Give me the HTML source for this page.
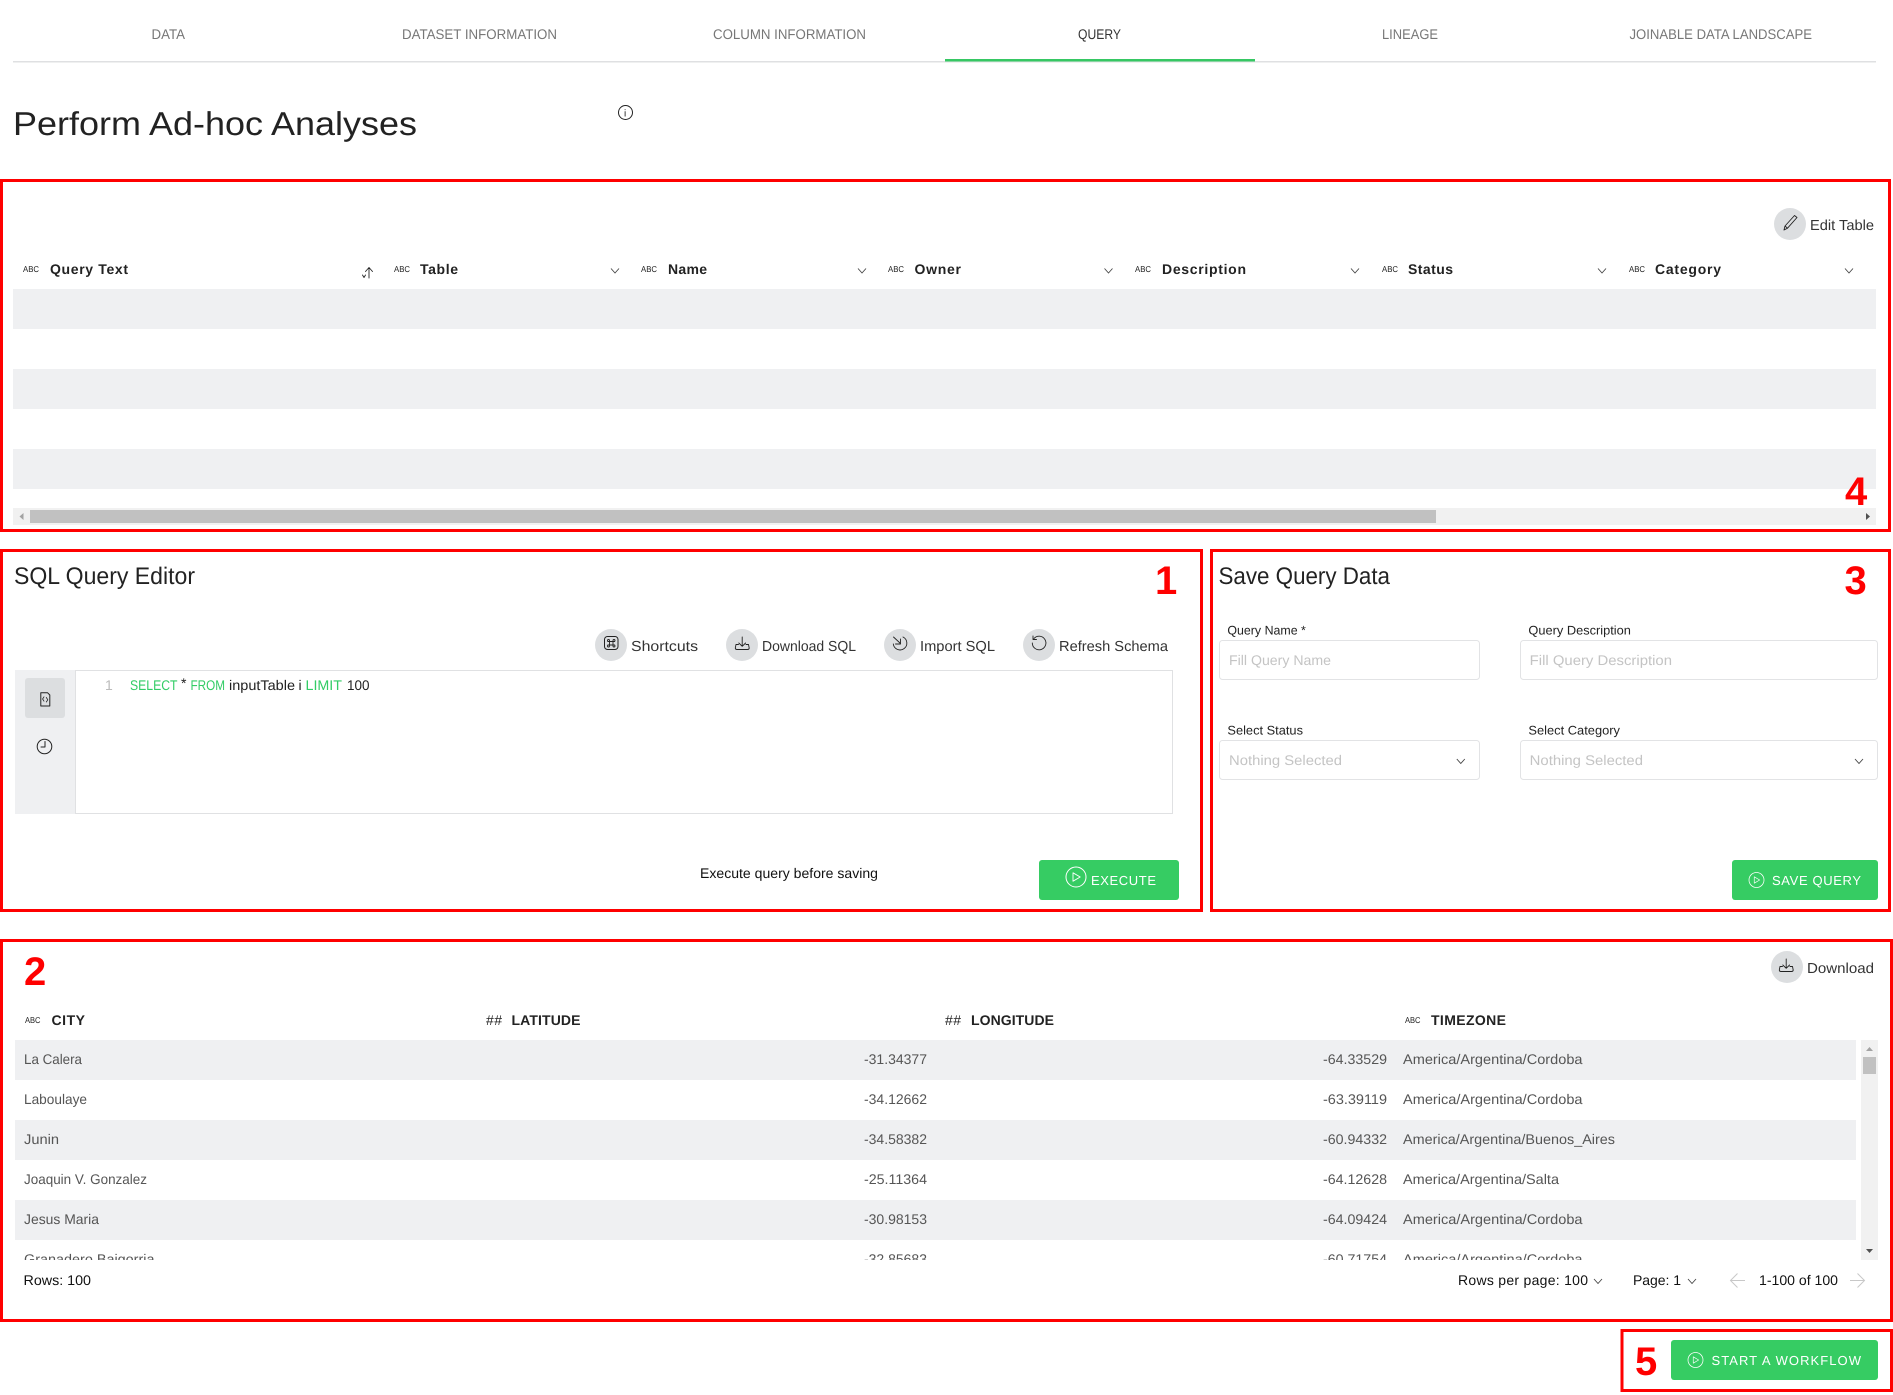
<!DOCTYPE html>
<html lang="en">
<head>
<meta charset="utf-8">
<title>Perform Ad-hoc Analyses</title>
<style>
html,body{margin:0;padding:0;background:#fff}
svg{display:block}
text{font-family:"Liberation Sans",sans-serif;fill:#222;text-rendering:geometricPrecision}
.tab{font-size:14px;fill:#777}
.h{font-size:14px;font-weight:700;fill:#222}
.abc{font-size:8.5px;fill:#222}
.act{font-size:14.5px;fill:#333}
.c{font-size:14px;fill:#555}
.p{font-size:14px;fill:#c4c4c4}
.l{font-size:12.5px;fill:#222}
.b{font-size:13px;fill:#fff;font-weight:400}
.n{font-size:40px;font-weight:700;fill:#f00}
.f{font-size:14px;fill:#111}
.sql{font-size:14px}
.ic{fill:none;stroke:#222;stroke-width:1;stroke-linecap:round;stroke-linejoin:round}
.chev{fill:none;stroke:#444;stroke-width:.9}
.rb{fill:none;stroke:#f00;stroke-width:3}
.in{fill:#fff;stroke:#e2e3e5;stroke-width:1}
</style>
</head>
<body>
<svg xmlns="http://www.w3.org/2000/svg" width="1893" height="1395" viewBox="0 0 1893 1395">
<defs>
<clipPath id="rows"><rect x="0" y="1040" width="1893" height="220"/></clipPath>
<g id="dl" class="ic"><path d="M7.2 0.5V9.5M3.8 6.5L7.2 9.8L10.6 6.5M3.5 8H1L0.3 11.5Q0.3 13 2 13H12.5Q14.2 13 14.2 11.5L13.5 8H11" style="stroke-width:.9"/></g>
<g id="play"><circle cx="0" cy="0" r="1" fill="none" stroke="#fff" stroke-width=".1"/><path d="M-.3 -.42V.42L.42 0Z" fill="none" stroke="#fff" stroke-width=".09" stroke-linejoin="round"/></g>
<path id="ch" class="chev" d="M0 0L4 4.5L8 0"/>
</defs>

<!-- Tabs -->
<rect x="13" y="61" width="1863" height="1.5" fill="#dfe0e2"/>
<rect x="945" y="59" width="310" height="2.5" fill="#36c763"/>
<text class="tab" x="151.5" y="39" textLength="33.5" lengthAdjust="spacingAndGlyphs">DATA</text>
<text class="tab" x="402" y="39" textLength="155" lengthAdjust="spacingAndGlyphs">DATASET INFORMATION</text>
<text class="tab" x="713" y="39" textLength="153" lengthAdjust="spacingAndGlyphs">COLUMN INFORMATION</text>
<text class="tab" style="fill:#333" x="1078" y="39" textLength="43" lengthAdjust="spacingAndGlyphs">QUERY</text>
<text class="tab" x="1382" y="39" textLength="56" lengthAdjust="spacingAndGlyphs">LINEAGE</text>
<text class="tab" x="1629.5" y="39" textLength="182.5" lengthAdjust="spacingAndGlyphs">JOINABLE DATA LANDSCAPE</text>

<!-- Title -->
<text x="13" y="135" style="font-size:33px" textLength="404" lengthAdjust="spacingAndGlyphs">Perform Ad-hoc Analyses</text>
<circle cx="625.5" cy="112.5" r="7" fill="none" stroke="#222" stroke-width="1"/>
<text x="624" y="116.5" style="font-size:10px">i</text>

<!-- Box 4 : queries table -->
<circle cx="1790" cy="224" r="16" fill="#dcdee0"/>
<path class="ic" style="stroke-width:.9" d="M1784 230L1785 226L1794.5 215.5L1797 217.5L1787.5 228.2ZM1785 226L1787.5 228.2"/>
<text class="act" x="1810" y="230" textLength="64" lengthAdjust="spacingAndGlyphs">Edit Table</text>

<text class="abc" x="23" y="272" textLength="16" lengthAdjust="spacingAndGlyphs">ABC</text>
<text class="h" x="50" y="274" textLength="78">Query Text</text>
<path class="ic" d="M369 278V268M365.5 271.5L369 267.5L372.5 271.5M362.5 275L364 277.5L365.5 275" style="stroke-width:.9"/>
<text class="abc" x="394" y="272" textLength="16" lengthAdjust="spacingAndGlyphs">ABC</text>
<text class="h" x="420" y="274" textLength="38">Table</text>
<use href="#ch" x="611" y="268.5"/>
<text class="abc" x="641" y="272" textLength="16" lengthAdjust="spacingAndGlyphs">ABC</text>
<text class="h" x="668" y="274" textLength="39">Name</text>
<use href="#ch" x="858" y="268.5"/>
<text class="abc" x="888" y="272" textLength="16" lengthAdjust="spacingAndGlyphs">ABC</text>
<text class="h" x="914.5" y="274" textLength="46.5">Owner</text>
<use href="#ch" x="1104.5" y="268.5"/>
<text class="abc" x="1135" y="272" textLength="16" lengthAdjust="spacingAndGlyphs">ABC</text>
<text class="h" x="1162" y="274" textLength="84">Description</text>
<use href="#ch" x="1351" y="268.5"/>
<text class="abc" x="1382" y="272" textLength="16" lengthAdjust="spacingAndGlyphs">ABC</text>
<text class="h" x="1408" y="274" textLength="45">Status</text>
<use href="#ch" x="1598" y="268.5"/>
<text class="abc" x="1629" y="272" textLength="16" lengthAdjust="spacingAndGlyphs">ABC</text>
<text class="h" x="1655" y="274" textLength="66">Category</text>
<use href="#ch" x="1845" y="268.5"/>

<rect x="13" y="289" width="1863" height="40" fill="#eff0f2"/>
<rect x="13" y="369" width="1863" height="40" fill="#eff0f2"/>
<rect x="13" y="449" width="1863" height="40" fill="#eff0f2"/>
<rect x="13" y="508" width="1863" height="17" fill="#f1f1f1"/>
<rect x="30" y="510" width="1406" height="13" fill="#c1c1c1"/>
<path d="M23.5 513V520L19.5 516.5Z" fill="#a3a3a3"/>
<path d="M1866 513V520L1870 516.5Z" fill="#505050"/>

<!-- Box 1 : editor -->
<text x="14" y="584" style="font-size:24px" textLength="181" lengthAdjust="spacingAndGlyphs">SQL Query Editor</text>

<circle cx="611" cy="645" r="16" fill="#dcdee0"/>
<rect x="604.5" y="636.5" width="13.5" height="13" rx="3" class="ic"/>
<path class="ic" style="stroke-width:.9" d="M609.5 640.5V646M613 640.5V646M607.8 641.5H614.7M607.8 645H614.7M609.5 641.5H608.5A1 1 0 1 1 609.5 640.5M613 641.5H614A1 1 0 1 0 613 640.5M609.5 645H608.5A1 1 0 1 0 609.5 646M613 645H614A1 1 0 1 1 613 646"/>
<text class="act" x="631" y="651" textLength="67" lengthAdjust="spacingAndGlyphs">Shortcuts</text>

<circle cx="742" cy="645" r="16" fill="#dcdee0"/>
<use href="#dl" x="735" y="636.5"/>
<text class="act" x="762" y="651" textLength="94" lengthAdjust="spacingAndGlyphs">Download SQL</text>

<circle cx="900" cy="645" r="16" fill="#dcdee0"/>
<path class="ic" style="stroke-width:.9" d="M903 637A6.8 6.8 0 1 1 893.3 644M893.5 637L900.5 643.5M900.5 639V644H895.5"/>
<text class="act" x="920" y="651" textLength="75" lengthAdjust="spacingAndGlyphs">Import SQL</text>

<circle cx="1039" cy="645" r="16" fill="#dcdee0"/>
<path class="ic" d="M1034 638.5A6.8 6.8 0 1 1 1032.3 643M1033 636V639.5H1036.5" style="stroke-width:.9"/>
<text class="act" x="1059" y="651" textLength="109" lengthAdjust="spacingAndGlyphs">Refresh Schema</text>

<rect x="15" y="670" width="60" height="144" fill="#eff0f2"/>
<rect x="75.5" y="670.5" width="1097" height="143" fill="#fff" stroke="#e0e1e3" stroke-width="1"/>
<rect x="25" y="678" width="40" height="40" rx="3" fill="#dcdee0"/>
<path class="ic" d="M40.8 692.7H47.5L49.8 695V706H40.8Z" style="stroke-width:1"/>
<path class="ic" d="M44 696.8L42.6 699L44 701.2M46.3 697.5L47.8 699.8L46.3 702" style="stroke-width:.8"/>
<circle cx="44.5" cy="746.5" r="7.3" class="ic" style="stroke-width:1"/>
<path class="ic" d="M45 741.5V747H41" style="stroke-width:1"/>

<text class="sql" style="fill:#bbb" x="105" y="690">1</text>
<text class="sql" style="fill:#33cc66" x="130" y="690" textLength="47.5" lengthAdjust="spacingAndGlyphs">SELECT</text>
<text class="sql" x="181" y="688">*</text>
<text class="sql" style="fill:#33cc66" x="190.5" y="690" textLength="34.5" lengthAdjust="spacingAndGlyphs">FROM</text>
<text class="sql" x="229" y="690" textLength="66" lengthAdjust="spacingAndGlyphs">inputTable</text>
<text class="sql" x="298.5" y="690">i</text>
<text class="sql" style="fill:#33cc66" x="305.5" y="690" textLength="36.5" lengthAdjust="spacingAndGlyphs">LIMIT</text>
<text class="sql" x="347" y="690" textLength="22.5" lengthAdjust="spacingAndGlyphs">100</text>

<text class="f" x="700" y="878" textLength="178" lengthAdjust="spacingAndGlyphs">Execute query before saving</text>
<rect x="1039" y="860" width="140" height="40" rx="3" fill="#36cc63"/>
<use href="#play" transform="translate(1076 877) scale(10)"/>
<text class="b" x="1091" y="885" textLength="65">EXECUTE</text>

<!-- Box 3 : save -->
<text x="1218.5" y="584" style="font-size:24px" textLength="171.5" lengthAdjust="spacingAndGlyphs">Save Query Data</text>
<text class="l" x="1227.4" y="634.5" textLength="78.5" lengthAdjust="spacingAndGlyphs">Query Name *</text>
<text class="l" x="1528.4" y="634.5" textLength="102.5" lengthAdjust="spacingAndGlyphs">Query Description</text>
<rect class="in" x="1219.5" y="640.5" width="260" height="39" rx="3"/>
<rect class="in" x="1520.5" y="640.5" width="357" height="39" rx="3"/>
<text class="p" x="1229" y="665" textLength="102" lengthAdjust="spacingAndGlyphs">Fill Query Name</text>
<text class="p" x="1529.7" y="665" textLength="142.3" lengthAdjust="spacingAndGlyphs">Fill Query Description</text>
<text class="l" x="1227.4" y="734.5" textLength="75.6" lengthAdjust="spacingAndGlyphs">Select Status</text>
<text class="l" x="1528.4" y="734.5" textLength="91.6" lengthAdjust="spacingAndGlyphs">Select Category</text>
<rect class="in" x="1219.5" y="740.5" width="260" height="39" rx="3"/>
<rect class="in" x="1520.5" y="740.5" width="357" height="39" rx="3"/>
<text class="p" x="1229" y="765" textLength="113" lengthAdjust="spacingAndGlyphs">Nothing Selected</text>
<text class="p" x="1529.7" y="765" textLength="113.3" lengthAdjust="spacingAndGlyphs">Nothing Selected</text>
<use href="#ch" x="1456.8" y="759"/>
<use href="#ch" x="1855" y="759"/>
<rect x="1732" y="860" width="146" height="40" rx="3" fill="#36cc63"/>
<use href="#play" transform="translate(1756.5 880) scale(7.5)"/>
<text class="b" x="1772" y="885" textLength="89">SAVE QUERY</text>

<!-- Box 2 : results -->
<circle cx="1787" cy="967" r="16" fill="#dcdee0"/>
<use href="#dl" x="1779" y="958.5"/>
<text class="act" x="1807" y="973" textLength="67" lengthAdjust="spacingAndGlyphs">Download</text>

<text class="abc" x="25" y="1023" textLength="15.5" lengthAdjust="spacingAndGlyphs">ABC</text>
<text class="h" x="51.5" y="1025" textLength="33.5">CITY</text>
<text class="h" style="font-weight:400" x="486" y="1025" textLength="16">##</text>
<text class="h" x="511.5" y="1025" textLength="69">LATITUDE</text>
<text class="h" style="font-weight:400" x="945" y="1025" textLength="16">##</text>
<text class="h" x="971" y="1025" textLength="83">LONGITUDE</text>
<text class="abc" x="1405" y="1023" textLength="15.5" lengthAdjust="spacingAndGlyphs">ABC</text>
<text class="h" x="1431" y="1025" textLength="75">TIMEZONE</text>

<rect x="15" y="1040" width="1841" height="40" fill="#eff0f2"/>
<rect x="15" y="1120" width="1841" height="40" fill="#eff0f2"/>
<rect x="15" y="1200" width="1841" height="40" fill="#eff0f2"/>

<g clip-path="url(#rows)">
<text class="c" x="24" y="1064" textLength="58" lengthAdjust="spacingAndGlyphs">La Calera</text>
<text class="c" x="864" y="1064" textLength="63" lengthAdjust="spacingAndGlyphs">-31.34377</text>
<text class="c" x="1323" y="1064" textLength="64" lengthAdjust="spacingAndGlyphs">-64.33529</text>
<text class="c" x="1403" y="1064" textLength="179.5" lengthAdjust="spacingAndGlyphs">America/Argentina/Cordoba</text>

<text class="c" x="24" y="1104" textLength="63" lengthAdjust="spacingAndGlyphs">Laboulaye</text>
<text class="c" x="864" y="1104" textLength="63" lengthAdjust="spacingAndGlyphs">-34.12662</text>
<text class="c" x="1323" y="1104" textLength="64" lengthAdjust="spacingAndGlyphs">-63.39119</text>
<text class="c" x="1403" y="1104" textLength="179.5" lengthAdjust="spacingAndGlyphs">America/Argentina/Cordoba</text>

<text class="c" x="24" y="1144" textLength="35" lengthAdjust="spacingAndGlyphs">Junin</text>
<text class="c" x="864" y="1144" textLength="63" lengthAdjust="spacingAndGlyphs">-34.58382</text>
<text class="c" x="1323" y="1144" textLength="64" lengthAdjust="spacingAndGlyphs">-60.94332</text>
<text class="c" x="1403" y="1144" textLength="212" lengthAdjust="spacingAndGlyphs">America/Argentina/Buenos_Aires</text>

<text class="c" x="24" y="1184" textLength="123" lengthAdjust="spacingAndGlyphs">Joaquin V. Gonzalez</text>
<text class="c" x="864" y="1184" textLength="63" lengthAdjust="spacingAndGlyphs">-25.11364</text>
<text class="c" x="1323" y="1184" textLength="64" lengthAdjust="spacingAndGlyphs">-64.12628</text>
<text class="c" x="1403" y="1184" textLength="156" lengthAdjust="spacingAndGlyphs">America/Argentina/Salta</text>

<text class="c" x="24" y="1224" textLength="75" lengthAdjust="spacingAndGlyphs">Jesus Maria</text>
<text class="c" x="864" y="1224" textLength="63" lengthAdjust="spacingAndGlyphs">-30.98153</text>
<text class="c" x="1323" y="1224" textLength="64" lengthAdjust="spacingAndGlyphs">-64.09424</text>
<text class="c" x="1403" y="1224" textLength="179.5" lengthAdjust="spacingAndGlyphs">America/Argentina/Cordoba</text>

<text class="c" x="24" y="1264" textLength="130.5" lengthAdjust="spacingAndGlyphs">Granadero Baigorria</text>
<text class="c" x="864" y="1264" textLength="63" lengthAdjust="spacingAndGlyphs">-32.85683</text>
<text class="c" x="1323" y="1264" textLength="64" lengthAdjust="spacingAndGlyphs">-60.71754</text>
<text class="c" x="1403" y="1264" textLength="179.5" lengthAdjust="spacingAndGlyphs">America/Argentina/Cordoba</text>
</g>

<rect x="1861" y="1040" width="17" height="220" fill="#f1f1f1"/>
<rect x="1863" y="1057" width="13" height="17" fill="#c1c1c1"/>
<path d="M1866 1051H1873L1869.5 1047Z" fill="#a3a3a3"/>
<path d="M1866 1249H1873L1869.5 1253Z" fill="#505050"/>

<text class="f" x="23.5" y="1285" textLength="67.5" lengthAdjust="spacingAndGlyphs">Rows: 100</text>
<text class="f" x="1458" y="1285" textLength="130">Rows per page: 100</text>
<use href="#ch" x="1594" y="1279"/>
<text class="f" x="1633" y="1285" textLength="48">Page: 1</text>
<use href="#ch" x="1688" y="1279"/>
<path d="M1745 1280.5H1730.5M1737.5 1273.5L1730.5 1280.5L1737.5 1287.5" fill="none" stroke="#c8c8c8" stroke-width="1"/>
<text class="f" x="1759" y="1285" textLength="79" lengthAdjust="spacingAndGlyphs">1-100 of 100</text>
<path d="M1850 1280.5H1864.5M1857.5 1273.5L1864.5 1280.5L1857.5 1287.5" fill="none" stroke="#c8c8c8" stroke-width="1"/>

<!-- Box 5 -->
<rect x="1671" y="1340" width="207" height="40" rx="3" fill="#36cc63"/>
<use href="#play" transform="translate(1695.5 1360) scale(7.5)"/>
<text class="b" x="1711.5" y="1365" textLength="149.5">START A WORKFLOW</text>

<!-- Red annotation boxes -->
<rect class="rb" x="1.5" y="180.5" width="1888" height="350"/>
<rect class="rb" x="1.5" y="550.5" width="1200" height="360"/>
<rect class="rb" x="1211.5" y="550.5" width="678" height="360"/>
<rect class="rb" x="1.5" y="940.5" width="1890" height="380"/>
<rect class="rb" x="1622" y="1330.5" width="269.5" height="60"/>
<text class="n" x="1845" y="505">4</text>
<text class="n" x="1155" y="594">1</text>
<text class="n" x="1844.5" y="594">3</text>
<text class="n" x="24" y="985">2</text>
<text class="n" x="1635" y="1375">5</text>
</svg>
</body>
</html>
